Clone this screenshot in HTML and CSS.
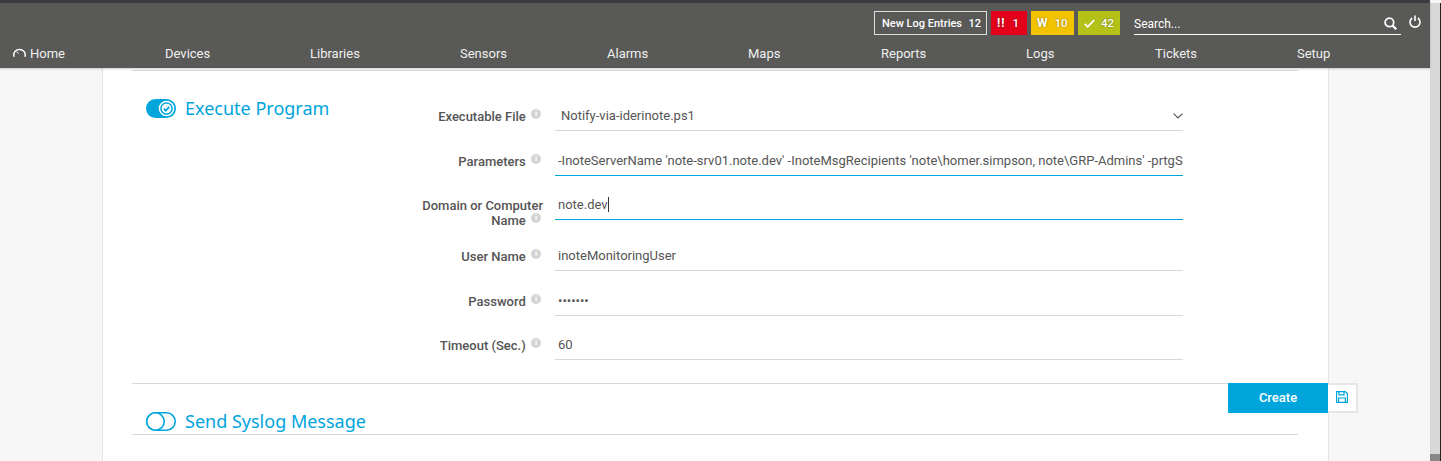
FILE: index.html
```html
<!DOCTYPE html>
<html lang="en">
<head>
    <meta charset="UTF-8">
    <meta name="viewport" content="width=device-width, initial-scale=1.0">
    <title>Execute Program</title>
    <link rel="stylesheet" href="styles.css">
</head>
<body>
    <div class="page">
        <header class="topbar">
            <div class="status-row">
                <div class="log-box"><span>New Log Entries</span><span>12</span></div>
                <div class="badge badge-red"><b>!!</b><span>1</span></div>
                <div class="badge badge-yellow"><b>W</b><span>10</span></div>
                <div class="badge badge-green">
                    <svg width="13" height="11" viewBox="0 0 13 11"><path d="M1 6l3.5 3.5L12 1.5" fill="none" stroke="#fff" stroke-width="2"/></svg>
                    <span>42</span>
                </div>
                <div class="search">
                    <span>Search...</span>
                    <svg width="13" height="13" viewBox="0 0 13 13"><circle cx="5.4" cy="5.4" r="4.3" fill="none" stroke="#fff" stroke-width="1.7"/><path d="M8.5 8.5l3.8 3.8" stroke="#fff" stroke-width="2.2"/></svg>
                </div>
                <svg class="power" width="12" height="13" viewBox="0 0 12 13"><path d="M3.2 3a5 5 0 1 0 5.6 0" fill="none" stroke="#fff" stroke-width="1.6"/><path d="M6 .5V6" stroke="#fff" stroke-width="1.6"/></svg>
            </div>
            <nav class="nav">
                <a class="nav-home">
                    <svg width="13" height="11" viewBox="0 0 13 11"><path d="M1.2 8.8A5.3 5.3 0 0 1 6.5 1.5a5.3 5.3 0 0 1 5.3 7.3" fill="none" stroke="#fff" stroke-width="1.5"/><path d="M3.6 3.8l2 1.8" stroke="#fff" stroke-width="1"/></svg>
                    Home
                </a>
                <a class="n1">Devices</a>
                <a class="n2">Libraries</a>
                <a class="n3">Sensors</a>
                <a class="n4">Alarms</a>
                <a class="n5">Maps</a>
                <a class="n6">Reports</a>
                <a class="n7">Logs</a>
                <a class="n8">Tickets</a>
                <a class="n9">Setup</a>
            </nav>
        </header>

        <main class="card">
            <section class="section">
                <div class="section-head">
                    <svg class="toggle" width="30" height="19" viewBox="0 0 30 19">
                        <rect width="30" height="19" rx="9.5" fill="#00a5dc"/>
                        <circle cx="20.5" cy="9.5" r="7.8" fill="#fff"/>
                        <circle cx="20.5" cy="9.5" r="5.6" fill="none" stroke="#00a5dc" stroke-width="1.5"/>
                        <path d="M17.8 9.6l2 2 3.4-3.8" fill="none" stroke="#00a5dc" stroke-width="1.9"/>
                    </svg>
                    <h2>Execute Program</h2>
                </div>
                <div class="form">
                    <div class="row">
                        <label><span>Executable File</span> <i class="info">i</i></label>
                        <div class="field field-select">
                            <span>Notify-via-iderinote.ps1</span>
                            <svg width="10" height="6" viewBox="0 0 10 6"><path d="M.7.7L5 5l4.3-4.3" fill="none" stroke="#555" stroke-width="1.2"/></svg>
                        </div>
                    </div>
                    <div class="row">
                        <label><span>Parameters</span> <i class="info">i</i></label>
                        <div class="field field-active"><span class="clip">-InoteServerName 'note-srv01.note.dev' -InoteMsgRecipients 'note\homer.simpson, note\GRP-Admins' -prtgServer 'prtg.note.dev'</span></div>
                    </div>
                    <div class="row row-tall">
                        <label><span>Domain or Computer Name</span> <i class="info">i</i></label>
                        <div class="field field-active"><span>note.dev</span><span class="caret"></span></div>
                    </div>
                    <div class="row">
                        <label><span>User Name</span> <i class="info">i</i></label>
                        <div class="field"><span>inoteMonitoringUser</span></div>
                    </div>
                    <div class="row">
                        <label><span>Password</span> <i class="info">i</i></label>
                        <div class="field"><span>&bull;&bull;&bull;&bull;&bull;&bull;&bull;</span></div>
                    </div>
                    <div class="row">
                        <label><span>Timeout (Sec.)</span> <i class="info">i</i></label>
                        <div class="field"><span>60</span></div>
                    </div>
                </div>
            </section>

            <section class="section-next">
                <svg class="toggle" width="30" height="19" viewBox="0 0 30 19">
                    <rect x=".8" y=".8" width="28.4" height="17.4" rx="8.7" fill="none" stroke="#00a5dc" stroke-width="1.6"/>
                    <circle cx="9.5" cy="9.5" r="8.7" fill="#fff" stroke="#00a5dc" stroke-width="1.6"/>
                </svg>
                <h2>Send Syslog Message</h2>
            </section>

            <div class="actions">
                <button class="btn-create">Create</button>
                <button class="btn-save">
                    <svg width="12" height="12" viewBox="0 0 12 12"><path d="M.6.6h8.6l2.2 2.2v8.6H.6z" fill="none" stroke="#00a5dc" stroke-width="1.2"/><path d="M3 .8v3h5v-3M2.6 11V7h6.8v4" fill="none" stroke="#00a5dc" stroke-width="1.2"/></svg>
                </button>
            </div>
        </main>
    </div>
    <div class="scrollbar"></div>
</body>
</html>
```

FILE: styles.css
```css
* {
    box-sizing: border-box;
}
body {
    margin: 0;
    height: 461px;
    overflow: hidden;
    background-color: #f7f7f7;
    font-family: Roboto, Arial, sans-serif;
    font-size: 13px;
    color: #555;
    display: flex;
}
.page {
    width: 1430px;
    flex: none;
    display: flex;
    flex-direction: column;
}
.scrollbar {
    flex: 1;
    margin-top: 3px;
    background-color: #d8d8d8;
    border-right: 1px solid #222;
    display: flex;
    flex-direction: column;
    justify-content: flex-end;
}
.scrollbar::after {
    content: "";
    height: 7px;
    background-color: #888;
}

/* top bar */
.topbar {
    height: 68px;
    flex: none;
    background-color: #595957;
    border-top: 3px solid #3c3c40;
    box-shadow: 0 1px 2px rgba(0,0,0,0.2);
    color: #fff;
    position: relative;
    z-index: 2;
}
.status-row {
    height: 38px;
    padding: 8px 0 0 874px;
    display: flex;
    align-items: flex-start;
    font-weight: 500;
}
.log-box {
    flex: none;
    width: 113px;
    height: 24px;
    border: 1px solid #ddd;
    display: flex;
    justify-content: space-between;
    align-items: center;
    padding: 0 5px 0 7px;
    font-size: 11px;
}
.badge {
    flex: none;
    height: 24px;
    margin-left: 4px;
    display: flex;
    align-items: center;
    gap: 7px;
    padding: 0 6px;
    font-size: 11.5px;
    text-shadow: 0 0 2px rgba(0,0,0,0.45);
}
.badge b {
    font-size: 12px;
}
.badge-red { background-color: #e2001a; width: 36px; gap: 7px; }
.badge-red b { letter-spacing: 1px; }
.badge-yellow { background-color: #f2c300; width: 43px; }
.badge-green { background-color: #b4c119; width: 42px; gap: 6px; }
.search {
    flex: none;
    width: 267px;
    height: 24px;
    margin-left: 14px;
    border-bottom: 1px solid #fff;
    padding-top: 6px;
    display: flex;
    justify-content: space-between;
    font-size: 12px;
    font-weight: 400;
}
.search svg {
    margin: 0 4px 0 0;
}
.power {
    flex: none;
    margin: 4px 0 0 8px;
}
.nav {
    position: relative;
    height: 27px;
    font-size: 13px;
}
.nav a {
    position: absolute;
    top: 5px;
    color: #f0f0f0;
}
.nav-home { left: 13px; display: flex; align-items: center; gap: 4px; }
.n1 { left: 165px; }
.n2 { left: 310px; }
.n3 { left: 460px; }
.n4 { left: 607px; }
.n5 { left: 748px; }
.n6 { left: 881px; }
.n7 { left: 1026px; }
.n8 { left: 1155px; }
.n9 { left: 1297px; }

/* card */
.card {
    width: 1227px;
    flex: 1;
    margin-left: 102px;
    padding: 0 30px 0 29px;
    background-color: #fff;
    border-left: 1px solid #e4e4e4;
    border-right: 1px solid #e4e4e4;
    position: relative;
}
.section {
    display: flex;
    border-top: 1px solid #d8d8d8;
    border-bottom: 1px solid #d8d8d8;
    height: 314px;
    margin-top: 2px;
    padding: 0 0 0 14px;
}
.section-head {
    width: 280px;
    height: 28px;
    margin-top: 23px;
    display: flex;
    align-items: center;
    gap: 9px;
    flex: none;
}
h2 {
    margin: 0;
    font-family: "Noto Sans", "Open Sans", sans-serif;
    font-size: 18px;
    font-weight: 400;
    color: #00a5dc;
}
.toggle {
    flex: none;
    display: block;
}
.form {
    width: 863px;
    padding-top: 24px;
    margin-left: -10px;
}
.row {
    display: flex;
    height: 44.5px;
}
.row-tall {
    height: 51px;
}
.row label {
    width: 127px;
    flex: none;
    padding-top: 14px;
    text-align: right;
    font-weight: 500;
    font-size: 13px;
    line-height: 15px;
}
.info {
    display: inline-block;
    width: 10px;
    height: 10px;
    margin: 0 2px;
    border-radius: 50%;
    background-color: #d4d4d4;
    color: #fff;
    font-size: 8px;
    font-style: normal;
    font-weight: 700;
    line-height: 10px;
    text-align: center;
    vertical-align: 3px;
    transform: translateY(-2px);
}
.field {
    flex: none;
    width: 628px;
    height: 36px;
    margin-left: 12px;
    padding: 13px 3px 0;
    border-bottom: 1px solid #d8d8d8;
    display: flex;
    font-size: 13px;
    line-height: 15px;
    overflow: hidden;
}
.field-active {
    border-bottom-color: #00a5dc;
}
.field-select {
    justify-content: space-between;
    padding: 13px 0 0 6px;
}
.field-select svg {
    margin-top: 5px;
}
.clip {
    white-space: nowrap;
}
.caret {
    width: 1px;
    height: 15px;
    background-color: #333;
}

/* bottom */
.section-next {
    display: flex;
    align-items: center;
    gap: 9px;
    height: 51px;
    border-bottom: 1px solid #d8d8d8;
    padding: 24px 0 0 14px;
}
.actions {
    position: absolute;
    top: 315px;
    right: -30px;
    display: flex;
}
.actions button {
    height: 30px;
    border: 0;
    margin: 0;
    padding: 0;
    font-family: inherit;
}
.actions .btn-create {
    width: 100px;
    padding-bottom: 2px;
    background-color: #00a5dc;
    color: #fff;
    font-size: 13px;
    font-weight: 500;
}
.actions .btn-save {
    width: 30px;
    background-color: #fff;
    border: 2px solid #e6e6e6;
    border-left: 0;
}
```
